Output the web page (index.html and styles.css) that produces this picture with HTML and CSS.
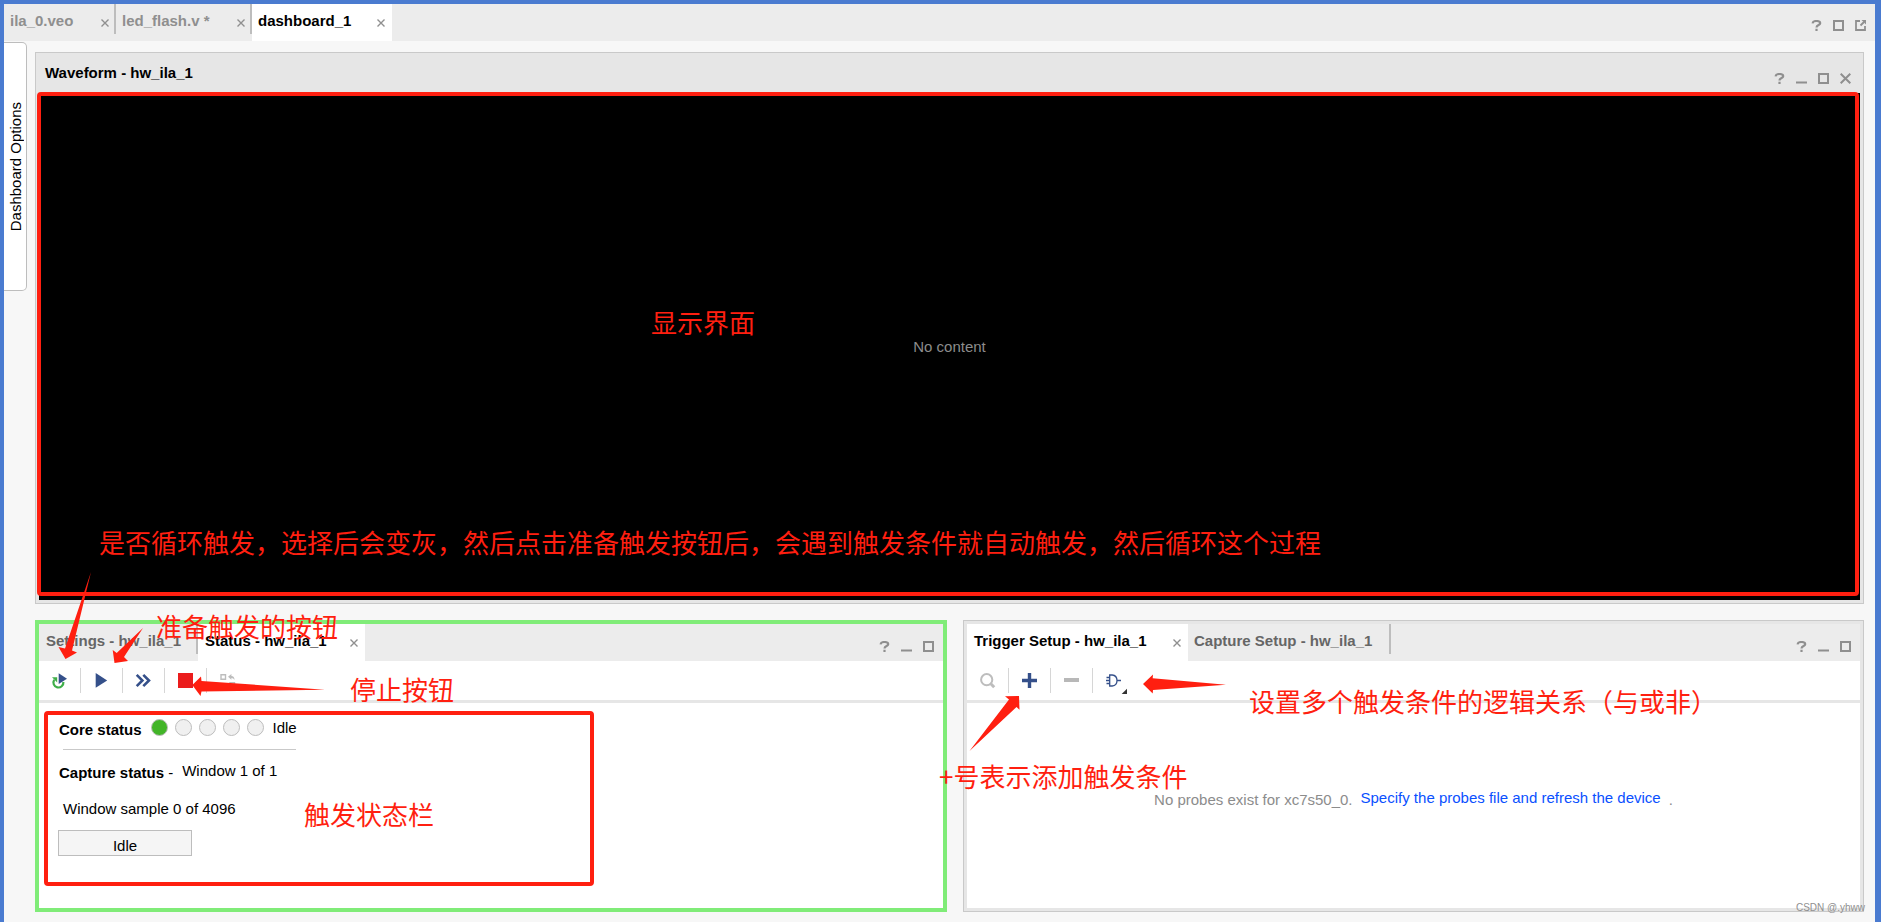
FILE: index.html
```html
<!DOCTYPE html>
<html lang="zh-CN">
<head>
<meta charset="utf-8">
<title>dashboard_1</title>
<link rel="stylesheet" href="styles.css">
</head>
<body>
<svg class="defs" aria-hidden="true">
  <symbol id="help" viewBox="0 0 11 11"><path d="M1.5 3.4C1.8 1.7 3.4 1 5.4 1 7.6 1 9.2 1.8 9.2 3.3 9.2 5.2 5.5 5 5.5 7.6M5.5 8.8V11" fill="none" stroke="#8f8f8f" stroke-width="2.2"/></symbol>
  <symbol id="min" viewBox="0 0 11 11"><path d="M0 9.5H11" stroke="#8f8f8f" stroke-width="2"/></symbol>
  <symbol id="max" viewBox="0 0 11 11"><path d="M1 1H10V10H1Z" fill="none" stroke="#8f8f8f" stroke-width="2"/></symbol>
  <symbol id="pop" viewBox="0 0 11 11"><path d="M5 1H1V10H10V6M5.5 5.5L9 2" fill="none" stroke="#8f8f8f" stroke-width="1.8"/><path d="M6.5 0H11V4.5Z" fill="#8f8f8f"/></symbol>
  <symbol id="close" viewBox="0 0 11 11"><path d="M.7.7L10.3 10.3M10.3.7L.7 10.3" fill="none" stroke="#8f8f8f" stroke-width="2"/></symbol>
  <symbol id="tab-close" viewBox="0 0 8 8"><path d="M.5.5L7.5 7.5M7.5.5L.5 7.5" fill="none" stroke="#8f8f8f" stroke-width="1.4"/></symbol>
</svg>

<div class="window">
  <header class="tabbar">
    <div class="tabs" role="tablist">
      <div class="tab tab-veo muted"><button class="label" role="tab">ila_0.veo</button><button class="x" aria-label="Close ila_0.veo"><svg><use href="#tab-close"/></svg></button></div>
      <div class="tab tab-verilog muted"><button class="label" role="tab">led_flash.v *</button><button class="x" aria-label="Close led_flash.v"><svg><use href="#tab-close"/></svg></button></div>
      <div class="tab tab-dash active"><button class="label" role="tab" aria-selected="true">dashboard_1</button><button class="x" aria-label="Close dashboard_1"><svg><use href="#tab-close"/></svg></button></div>
    </div>
    <div class="controls">
      <button aria-label="Help"><svg><use href="#help"/></svg></button>
      <button aria-label="Maximize"><svg><use href="#max"/></svg></button>
      <button aria-label="Float"><svg><use href="#pop"/></svg></button>
    </div>
  </header>

  <div class="workspace">
    <button class="side-tab"><span>Dashboard Options</span></button>
    <main class="dashboard">
      <section class="panel wave">
        <div class="wave-head">
          <h2>Waveform - hw_ila_1</h2>
          <div class="controls">
            <button aria-label="Help"><svg><use href="#help"/></svg></button>
            <button aria-label="Minimize"><svg><use href="#min"/></svg></button>
            <button aria-label="Maximize"><svg><use href="#max"/></svg></button>
            <button aria-label="Close"><svg><use href="#close"/></svg></button>
          </div>
        </div>
        <div class="screen">
          <span>No content</span>
          <div class="outline"></div>
          <span class="note note-display">显示界面</span>
          <span class="note note-loop">是否循环触发，选择后会变灰，然后点击准备触发按钮后，会遇到触发条件就自动触发，然后循环这个过程</span>
        </div>
      </section>

      <div class="lower">
        <section class="panel status-panel">
          <div class="tabbar">
            <div class="tabs" role="tablist">
              <div class="tab tab-settings"><button class="label" role="tab">Settings - hw_ila_1</button></div>
              <div class="tab tab-status active"><button class="label" role="tab" aria-selected="true">Status - hw_ila_1</button><button class="x" aria-label="Close Status"><svg><use href="#tab-close"/></svg></button></div>
            </div>
            <div class="controls">
              <button aria-label="Help"><svg><use href="#help"/></svg></button>
              <button aria-label="Minimize"><svg><use href="#min"/></svg></button>
              <button aria-label="Maximize"><svg><use href="#max"/></svg></button>
            </div>
          </div>
          <div class="toolbar">
            <button aria-label="Auto re-trigger"><svg viewBox="0 0 25 25"><path d="M7.2 11.8A5 5 0 1 0 16.4 14" fill="none" stroke="#3fae49" stroke-width="2.2"/><path d="M5 9.3H10.2V14.6Z" fill="#3fae49"/><path d="M11.7 5.3L20 10.7L11.7 16Z" fill="#35508a"/></svg></button>
            <button aria-label="Run trigger"><svg viewBox="0 0 25 25"><path d="M6.7 5L18.2 12.4L6.7 19.8Z" fill="#35508a"/></svg></button>
            <button aria-label="Run trigger immediate"><svg viewBox="0 0 25 25"><path d="M5.7 6.8L11.4 12.5L5.7 18.2M12.3 6.8L18 12.5L12.3 18.2" fill="none" stroke="#35508a" stroke-width="2.6"/></svg></button>
            <button aria-label="Stop trigger"><svg viewBox="0 0 25 25"><path d="M5 5H20V20H5Z" fill="#eb1c1c"/></svg></button>
            <button aria-label="Toggle layout"><svg viewBox="0 0 25 25"><path d="M6 6.7H10.5V11.2H6ZM15 14.7H19.5V19.2H15Z" fill="none" stroke="#bdbdbd" stroke-width="1.4"/><path d="M13 8.8L16.4 6V7.9Q19.5 8 19.5 12Q18.5 10 16.4 10V11.7Z" fill="#bdbdbd"/></svg></button>
          </div>
          <div class="status-box">
            <div class="row">
              <strong>Core status</strong>
              <div class="lights"><i class="on"></i><i></i><i></i><i></i><i></i></div>
              <span>Idle</span>
            </div>
            <hr>
            <div class="row capture"><strong>Capture status <b>-</b></strong><span>Window 1 of 1</span></div>
            <p class="sample">Window sample 0 of 4096</p>
            <div class="progress" role="progressbar" aria-valuenow="0">Idle</div>
          </div>
          <svg class="arrows" viewBox="39 560 300 150" aria-hidden="true">
            <path d="M91 572L65 648.5L58.5 647L65.5 659L77 652.5L72 650.5Z"/>
            <path d="M143 628L116.7 653L112.7 650L114.5 663L128 661L124 657Z"/>
            <path d="M325 689.7L201.5 681L201 676.5L192.3 685L200.5 696L201.5 691.5Z"/>
          </svg>
          <span class="note note-arm">准备触发的按钮</span>
          <span class="note note-stop">停止按钮</span>
          <span class="note note-state">触发状态栏</span>
        </section>

        <section class="panel trigger-panel">
          <div class="tabbar">
            <div class="tabs" role="tablist">
              <div class="tab tab-trigger active"><button class="label" role="tab" aria-selected="true">Trigger Setup - hw_ila_1</button><button class="x" aria-label="Close Trigger Setup"><svg><use href="#tab-close"/></svg></button></div>
              <div class="tab tab-capture"><button class="label" role="tab">Capture Setup - hw_ila_1</button></div>
            </div>
            <div class="controls">
              <button aria-label="Help"><svg><use href="#help"/></svg></button>
              <button aria-label="Minimize"><svg><use href="#min"/></svg></button>
              <button aria-label="Maximize"><svg><use href="#max"/></svg></button>
            </div>
          </div>
          <div class="toolbar">
            <button aria-label="Search"><svg viewBox="0 0 25 25"><circle cx="11.7" cy="11.7" r="5.6" fill="none" stroke="#bdbdbd" stroke-width="2"/><path d="M15.8 15.8L19.2 19.2" stroke="#bdbdbd" stroke-width="3"/></svg></button>
            <button aria-label="Add probe"><svg viewBox="0 0 25 25"><path d="M5 12.5H20M12.5 5V20" stroke="#35508a" stroke-width="3.4"/></svg></button>
            <button aria-label="Remove probe"><svg viewBox="0 0 25 25"><path d="M5 12H20" stroke="#b8b8b8" stroke-width="4"/></svg></button>
            <button aria-label="Trigger condition"><svg viewBox="0 0 25 25"><path d="M8.7 7H11.2Q16 7.5 16 12.5Q16 17.5 11.2 18H8.7ZM16 12.5H20M5.5 9.5H8.7M5 12.5H8.7M5.5 15.5H8.7" fill="none" stroke="#35508a" stroke-width="1.3"/><path d="M20.7 26H26V20.7Z" fill="#333"/></svg></button>
          </div>
          <div class="empty"><span>No probes exist for xc7s50_0.</span><a href="#">Specify the probes file and refresh the device</a><span>.</span></div>
          <svg class="arrows" viewBox="964 660 270 100" aria-hidden="true">
            <path d="M1226 684.7L1152.7 678.3L1153 674.5L1143 684L1152.7 693.5L1153 690Z"/>
            <path d="M969.5 751L1009 699.5L1005 696.3L1019 696L1019.5 709.7L1016.5 707Z"/>
          </svg>
          <span class="note note-logic">设置多个触发条件的逻辑关系（与或非）</span>
          <span class="note note-add">+号表示添加触发条件</span>
        </section>
      </div>
    </main>
  </div>
  <span class="watermark">CSDN @.yhww</span>
</div>
</body>
</html>
```
FILE: styles.css
```css
* { box-sizing: border-box; }
body {
  margin: 0;
  font: 15px/20px "Liberation Sans", "Noto Sans CJK SC", sans-serif;
  color: #000;
}
button {
  margin: 0;
  padding: 0;
  border: 0;
  background: none;
  font: inherit;
  color: inherit;
}
svg { display: block; }
.defs { position: absolute; width: 0; height: 0; }

.window {
  position: relative;
  display: flex;
  flex-direction: column;
  min-height: 100vh;
  border: solid #4a7bd0;
  border-width: 4px 6px 0 4px;
  background: #f7f7f7;
}

/* Tab bars */
.tabbar {
  display: flex;
  justify-content: space-between;
  height: 37px;
  background: #ececec;
}
.tabs { display: flex; align-items: flex-start; }
.tab {
  display: flex;
  justify-content: space-between;
  height: 30px;
  padding: 4px 5px 0 6px;
  border-right: 2px solid #bdbdbd;
  font-weight: bold;
  line-height: 26px;
  color: #666;
  white-space: nowrap;
}
.tab.muted { color: #8f8f8f; }
.tab.active {
  height: 37px;
  padding-right: 7px;
  border-right: 0;
  background: #fff;
  color: #000;
}
.label { height: 26px; }
.x { height: 30px; }
.x svg { width: 8px; height: 8px; }
.tab-veo { min-width: 112px; }
.tab-verilog { min-width: 136px; }
.tab-dash { min-width: 140px; }
.tab-settings { min-width: 159px; }
.tab-status { min-width: 167px; }
.tab-trigger { min-width: 221px; }
.tab-capture { min-width: 203px; }
.panel .tab { padding-left: 7px; }
.panel .tab-capture { padding-left: 6px; }

.controls {
  display: flex;
  align-items: center;
  gap: 11px;
  padding: 6px 9px 0 0;
}
.panel .controls { padding-top: 8px; }
.controls svg { width: 11px; height: 11px; }

/* Workspace */
.workspace { display: flex; flex: 1; gap: 8px; }
.side-tab {
  align-self: flex-start;
  display: flex;
  align-items: center;
  justify-content: center;
  width: 23px;
  height: 249px;
  margin-top: 1px;
  padding-left: 2px;
  border: 1px solid #bdbdbd;
  border-left: 0;
  border-radius: 0 5px 5px 0;
  background: #fff;
}
.side-tab span { writing-mode: vertical-rl; transform: rotate(180deg); }
.dashboard {
  display: flex;
  flex: 1;
  flex-direction: column;
  gap: 16px;
  min-width: 0;
  padding: 11px 11px 10px 0;
}
.panel {
  position: relative;
  border: 1px solid #c9c9c9;
  background: #e6e6e6;
}

/* Waveform */
.wave { display: flex; flex: 1; flex-direction: column; padding: 0 3px 3px; }
.wave-head {
  display: flex;
  align-items: center;
  justify-content: space-between;
  height: 40px;
}
.wave-head h2 { margin: 0; padding-left: 6px; font-size: 15px; }
.wave .controls { padding-top: 11px; }
.screen {
  position: relative;
  display: flex;
  flex: 1;
  align-items: center;
  justify-content: center;
  background: #000;
  color: #8c8c8c;
}
.outline {
  position: absolute;
  inset: -1px 1px 4px -2px;
  border: 4px solid #ff1f10;
  border-radius: 4px;
}

/* Lower panels */
.lower { display: flex; gap: 16px; }
.status-panel { flex: 912 1 0; border: 4px solid #80ec78; background: #fff; }
.trigger-panel {
  display: flex;
  flex: 901 1 0;
  flex-direction: column;
  padding: 3px;
}
.toolbar {
  display: flex;
  align-items: center;
  height: 42px;
  border-bottom: 3px solid #e6e6e6;
  background: #fff;
}
.toolbar button {
  display: flex;
  justify-content: center;
  width: 42px;
  border-right: 1px solid #d6d6d6;
}
.toolbar button:last-child { border-right-color: transparent; }
.toolbar svg { width: 25px; height: 25px; overflow: visible; }

.status-box {
  width: 550px;
  margin: 8px 5px 22px;
  padding: 4px 11px 26px 10px;
  border: 4px solid #ff1f10;
  border-radius: 4px;
}
.row { display: flex; align-items: flex-start; gap: 9px; height: 17px; padding-left: 1px; line-height: 18px; }
.row strong { padding-top: 2px; }
.lights { display: flex; gap: 7px; }
.lights i {
  width: 17px;
  height: 17px;
  border: 1px solid #bdbdbd;
  border-radius: 50%;
  background: #f0f0f0;
}
.lights .on { background: #42b528; }
.status-box hr {
  width: 233px;
  height: 1px;
  margin: 13px 0 0 5px;
  border: 0;
  background: #c9c9c9;
}
.capture { height: 22px; margin-top: 11px; line-height: 20px; }
.capture b { font-weight: normal; }
.sample { margin: 16px 0 11px 5px; }
.progress {
  width: 134px;
  height: 26px;
  padding-top: 5px;
  border: 1px solid #bdbdbd;
  background: #f5f5f5;
  text-align: center;
}
.empty {
  display: flex;
  flex: 1;
  align-items: center;
  justify-content: center;
  gap: 8px;
  padding-bottom: 12px;
  background: #fff;
  color: #8c8c8c;
}
.empty a { padding-bottom: 3px; color: #0a50ff; text-decoration: none; }

/* Annotations drawn over the panels */
.note {
  position: absolute;
  z-index: 2;
  font: 400 26px/30px "Noto Sans CJK SC", sans-serif;
  color: #ff1f10;
  white-space: nowrap;
}
.note-display { left: 612px; top: 214px; }
.note-loop { left: 60px; bottom: 43px; }
.note-arm { left: 117px; top: -13px; }
.note-stop { left: 311px; top: 50px; }
.note-state { left: 265px; top: 175px; }
.note-logic { left: 285px; top: 65px; }
.note-add { left: -25px; top: 140px; }
.arrows { position: absolute; z-index: 2; left: 0; fill: #ff1f10; pointer-events: none; }
.status-panel .arrows { top: -64px; width: 300px; height: 150px; }
.trigger-panel .arrows { top: 39px; width: 270px; height: 100px; }

.watermark {
  position: absolute;
  right: 10px;
  bottom: 7px;
  font-size: 10px;
  line-height: 14px;
  color: #8f8f8f;
}
```
